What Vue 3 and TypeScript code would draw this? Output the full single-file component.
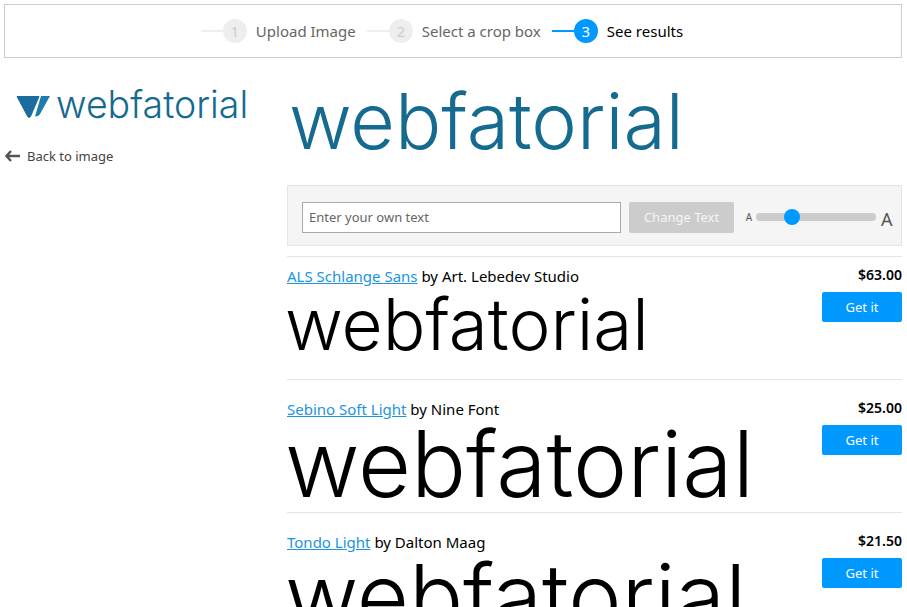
<template>
  <div class="page">
    <div class="steps">
      <div v-for="(step, i) in steps" :key="step" :class="['step', { active: i === 2 }]">
        <span class="step-line"></span>
        <span class="step-num">{{ i + 1 }}</span>
        <span class="step-label">{{ step }}</span>
      </div>
    </div>
    <div class="content">
      <aside class="sidebar">
        <div class="logo">
          <svg class="logo-mark" width="34" height="24" viewBox="0 0 34 24">
            <path d="M1 1.500h22L14.500 21.500q-1 1.500-2.500 .5z" fill="#1a6d9e" stroke="#1a6d9e" stroke-linejoin="round" />
            <path d="M25 1h9L24 19q-1 2-5 2.500z" fill="#1f7cab" />
          </svg>
          <span class="logo-text">webfatorial</span>
        </div>
        <a class="back">
          <svg width="15" height="12" viewBox="0 0 15 12">
            <path d="M6 1 1.500 6 6 11M2 6h13" fill="none" stroke="#555" stroke-width="2.400" />
          </svg>
          <span>Back to image</span>
        </a>
      </aside>
      <main class="results">
        <div class="preview">webfatorial</div>
        <div class="controls">
          <input class="own-text" type="text" placeholder="Enter your own text" />
          <button class="change">Change Text</button>
          <span class="a-small">A</span>
          <div class="slider"><span class="thumb"></span></div>
          <span class="a-big">A</span>
        </div>
        <div v-for="font in fonts" :key="font.name" class="row" :style="{ height: font.height + 'px', paddingTop: font.top + 'px' }">
          <div class="info">
            <div class="credit"><a class="name">{{ font.name }}</a> by {{ font.by }}</div>
            <div class="sample" :style="{ fontSize: font.size + 'px', marginTop: font.gap + 'px' }">webfatorial</div>
          </div>
          <div class="buy">
            <div class="price">{{ font.price }}</div>
            <button class="get">Get it</button>
          </div>
        </div>
      </main>
    </div>
  </div>
</template>

<script setup lang="ts">
const steps = ['Upload Image', 'Select a crop box', 'See results']

const fonts = [
  { name: 'ALS Schlange Sans', by: 'Art. Lebedev Studio', price: '$63.00', size: 71, gap: 3, height: 123, top: 9 },
  { name: 'Sebino Soft Light', by: 'Nine Font', price: '$25.00', size: 91.500, gap: -1, height: 133, top: 19 },
  { name: 'Tondo Light', by: 'Dalton Maag', price: '$21.50', size: 90, gap: 0, height: 133, top: 19 },
]
</script>

<style>
html,
body {
  overflow: hidden;
  background: #fff;
}
</style>

<style scoped>
.page {
  height: 607px;
  padding: 4px 5px 0 4px;
  box-sizing: border-box;
  font-family: 'Noto Sans', sans-serif;
  color: #000;
  overflow: hidden;
}

.steps {
  height: 54px;
  box-sizing: border-box;
  border: 1px solid #ccc;
  display: flex;
  justify-content: center;
  align-items: center;
  gap: 11px;
  padding-right: 22px;
}

.step {
  display: flex;
  align-items: center;
  font-size: 15px;
  color: #666;
}

.step-label {
  margin-top: -1px;
}

.step-line {
  width: 22px;
  height: 2px;
  background: #eee;
}

.step-num {
  width: 24px;
  height: 24px;
  border-radius: 50%;
  background: #eee;
  color: #ccc;
  display: flex;
  align-items: center;
  justify-content: center;
  margin-right: 9px;
}

.step.active {
  color: #000;
}

.step.active .step-line {
  background: #0099ff;
}

.step.active .step-num {
  background: #0099ff;
  color: #fff;
}

.content {
  display: flex;
}

.sidebar {
  width: 283px;
  flex: none;
}

.logo {
  display: flex;
  align-items: center;
  gap: 8px;
  padding: 26px 0 0 12px;
  height: 40px;
}

.logo-mark {
  margin-top: 6px;
}

.logo-text {
  font-family: Inter, sans-serif;
  font-weight: 300;
  font-size: 37.500px;
  color: #156a90;
  margin-left: -2px;
}

.back {
  display: flex;
  align-items: center;
  gap: 7px;
  margin: 23px 0 0 1px;
  font-size: 13px;
  color: #444;
}

.results {
  flex: 1;
  min-width: 0;
}

.preview {
  height: 127px;
  font-family: Inter, sans-serif;
  font-weight: 300;
  font-size: 77px;
  line-height: 127px;
  color: #156a90;
  padding-left: 2px;
}

.controls {
  height: 61px;
  box-sizing: border-box;
  background: #f5f5f5;
  border: 1px solid #e5e5e5;
  display: flex;
  align-items: center;
  padding: 3px 0 0 14px;
  margin-bottom: 10px;
}

.own-text {
  flex: none;
  width: 319px;
  height: 31px;
  box-sizing: border-box;
  border: 1px solid #aaa;
  padding: 0 6px;
  font: 13px 'Noto Sans', sans-serif;
  background: #fff;
}

.own-text::placeholder {
  color: #666;
}

.change {
  flex: none;
  width: 105px;
  height: 31px;
  margin-left: 8px;
  border: 0;
  border-radius: 2px;
  background: #ccc;
  color: #f5f5f5;
  font: 13px 'Noto Sans', sans-serif;
}

.a-small {
  flex: none;
  width: 12px;
  margin-left: 9px;
  font-size: 10px;
  color: #555;
  text-align: center;
}

.slider {
  flex: none;
  position: relative;
  width: 120px;
  height: 8px;
  margin-left: 1px;
  border-radius: 4px;
  background: #ccc;
}

.thumb {
  position: absolute;
  left: 28px;
  top: -4px;
  width: 16px;
  height: 16px;
  border-radius: 50%;
  background: #0099ff;
}

.a-big {
  margin: 4px 0 0 5px;
  font-size: 18px;
  color: #555;
}

.row {
  box-sizing: border-box;
  border-top: 1px solid #e5e5e5;
  display: flex;
  justify-content: space-between;
  overflow: hidden;
}

.credit {
  font-size: 15px;
  line-height: 20px;
}

.name {
  color: #1b95e0;
  text-decoration: underline;
}

.sample {
  font-family: Inter, sans-serif;
  font-weight: 300;
  line-height: 1;
  white-space: nowrap;
  margin-left: -2px;
}

.buy {
  width: 80px;
  text-align: right;
}

.price {
  font-size: 14px;
  font-weight: 600;
  line-height: 16px;
  margin-top: 1px;
}

.get {
  display: block;
  width: 80px;
  height: 30px;
  margin-top: 9px;
  border: 0;
  border-radius: 2px;
  background: #0099ff;
  color: #fff;
  font: 13px 'Noto Sans', sans-serif;
}
</style>
